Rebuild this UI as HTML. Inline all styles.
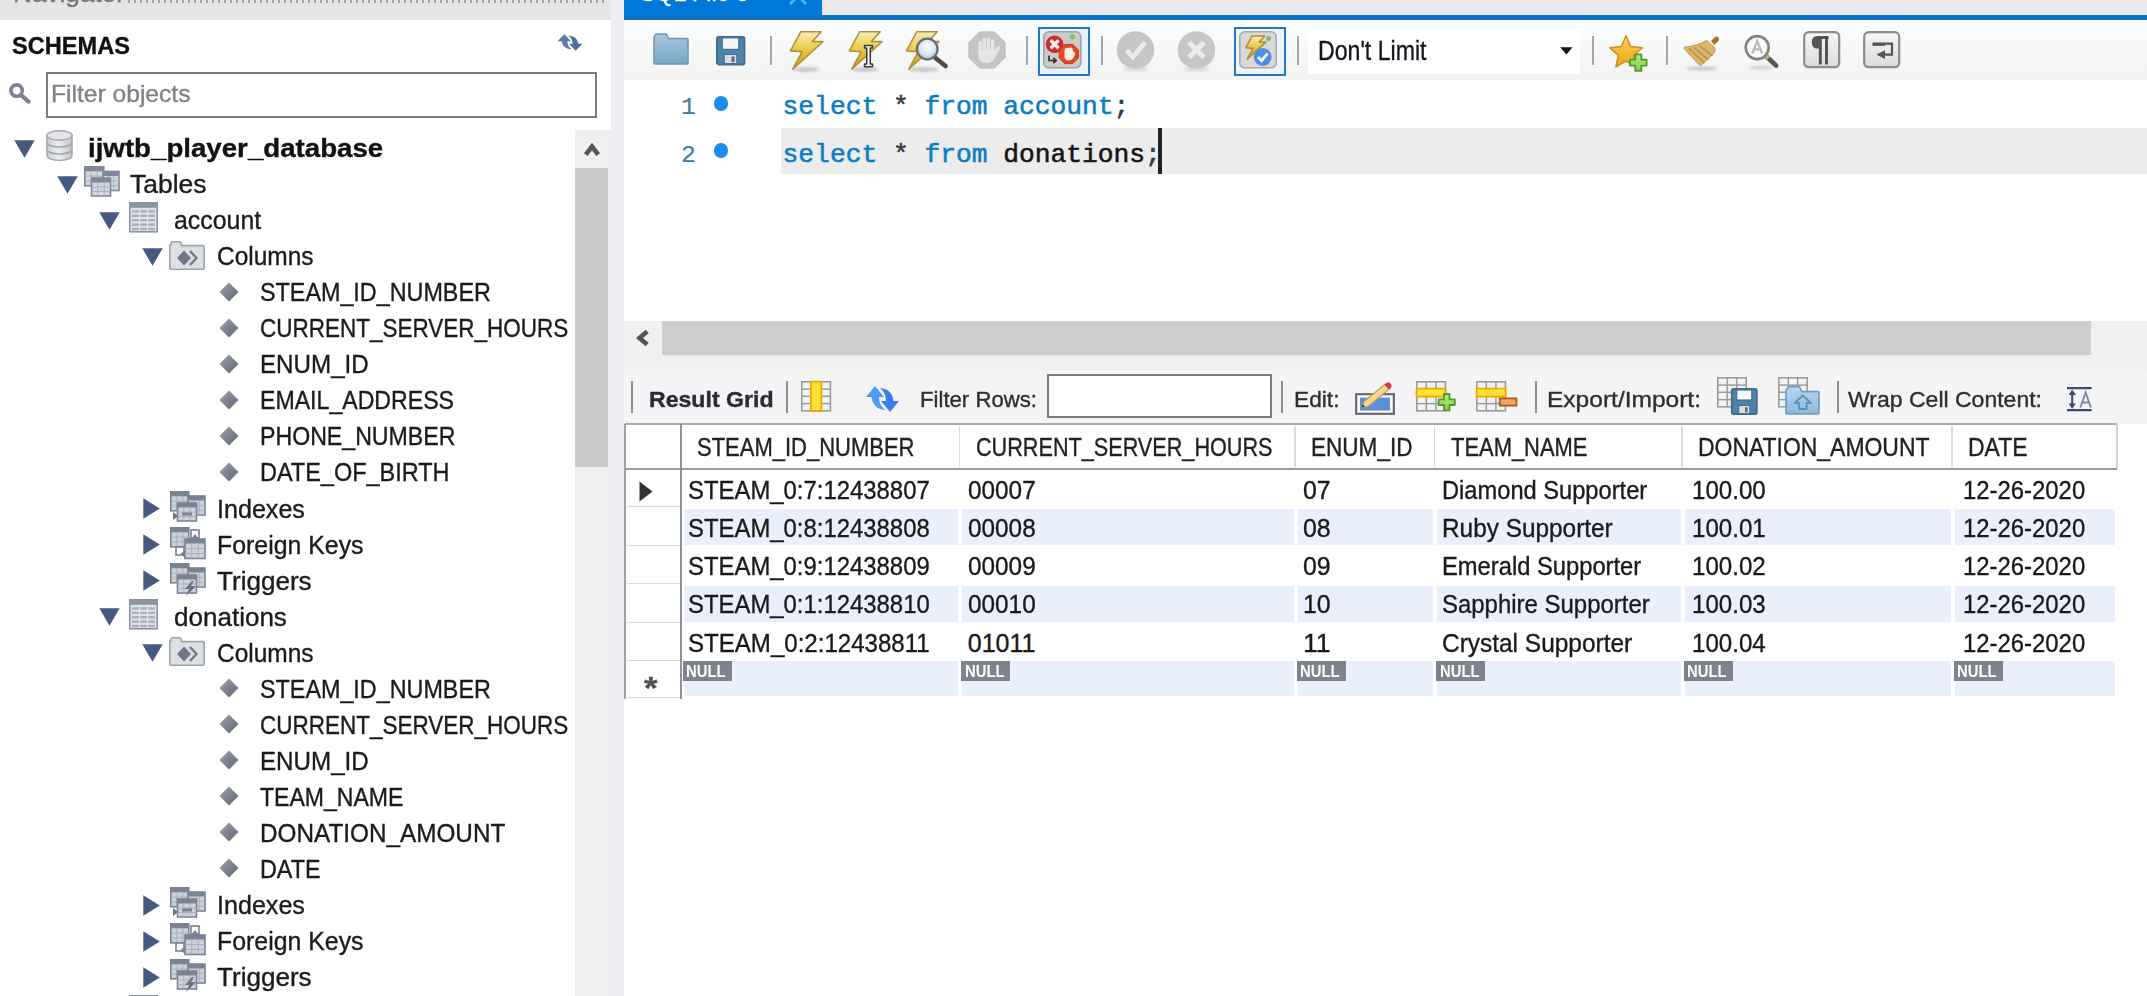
<!DOCTYPE html>
<html><head><meta charset="utf-8"><title>MySQL Workbench</title>
<style>
html,body{margin:0;padding:0;background:#fff;}
body{width:2147px;height:996px;overflow:hidden;font-family:"Liberation Sans",sans-serif;}
#root{position:relative;width:2147px;height:996px;overflow:hidden;background:#fff;}
.b{position:absolute;}
.t{position:absolute;white-space:pre;display:inline-block;transform-origin:0 50%;-webkit-text-stroke:0.35px currentColor;}
svg{position:absolute;overflow:visible;}
</style></head><body><div id="root">
<div class="b" style="left:0px;top:0px;width:611px;height:20px;background:#e5e5e5;"></div>
<div class="b" style="left:611px;top:0px;width:13px;height:996px;background:#eeeef2;"></div>
<div class="b" style="left:128px;top:0;width:478px;height:3px;background:repeating-linear-gradient(90deg,#8a8a8a 0 2px,transparent 2px 6px);opacity:.7"></div>
<div class="b" style="left:46px;top:72px;width:551px;height:46px;background:#fff;box-sizing:border-box;border:2px solid #7a7a7a;"></div>
<div class="b" style="left:574.5px;top:130px;width:34px;height:866px;background:#f0f0f0;"></div>
<div class="b" style="left:608px;top:130px;width:16px;height:866px;background:#eeeef2;"></div>
<div class="b" style="left:574.5px;top:168px;width:33.7px;height:299px;background:#cbcbcb;"></div>
<svg style="left:583.5px;top:142.4px" width="16" height="15" viewBox="0 0 16 15"><path d="M1.8 12.6 L8 4.6 L14.2 12.6" fill="none" stroke="#555" stroke-width="4.6"/></svg>
<div class="b" style="left:624px;top:0px;width:1523px;height:15.5px;background:#e8e8ec;"></div>
<div class="b" style="left:624px;top:0px;width:197.5px;height:16px;background:#0078d7;"></div>
<div class="b" style="left:624px;top:15.4px;width:1523px;height:4.3px;background:#0b72c6;"></div>
<div class="b" style="left:624px;top:19.7px;width:1523px;height:60.3px;background:linear-gradient(#fcfdfe,#f2f2f2);"></div>
<svg style="left:789px;top:-12px" width="18" height="17" viewBox="0 0 18 17"><path d="M1 0 L17 16 M17 0 L1 16" stroke="#58b6ff" stroke-width="2.6" fill="none"/></svg>
<div class="b" style="left:624px;top:80px;width:1523px;height:241px;background:#fff;"></div>
<div class="b" style="left:781.3px;top:128px;width:1366px;height:46.4px;background:#ececec;"></div>
<div class="b" style="left:1158px;top:128px;width:3.8px;height:46.4px;background:#222;"></div>
<div class="b" style="left:624px;top:321px;width:1523px;height:34px;background:#f0f0f0;"></div>
<div class="b" style="left:662px;top:321px;width:1429px;height:34px;background:#cdcdcd;"></div>
<svg style="left:634.6px;top:328.3px" width="16" height="20" viewBox="0 0 16 20"><path d="M12.2 3.4 L4.4 10 L12.2 16.6" fill="none" stroke="#555" stroke-width="4.6"/></svg>
<div class="b" style="left:624px;top:355px;width:1523px;height:69px;background:linear-gradient(#efefef 0,#f0f0f0 12px,#f4f4f6 22px,#f4f4f6 100%);"></div>
<svg style="left:14.3px;top:139.79999999999998px" width="21" height="18" viewBox="0 0 21 18"><path d="M0.3 0.3 H20.7 L10.5 17.8 Z" fill="#465a7f"/></svg>
<svg style="left:45.5px;top:130.29999999999998px" width="27" height="31" viewBox="0 0 27 31"><defs><linearGradient id="dbg" x1="0" y1="0" x2="1" y2="0"><stop offset="0" stop-color="#c9ccd1"/><stop offset=".45" stop-color="#eceef0"/><stop offset="1" stop-color="#c3c6cc"/></linearGradient></defs><path d="M1 5.5 V25.5 C1 32 26 32 26 25.5 V5.5 Z" fill="url(#dbg)" stroke="#a3a7ae" stroke-width="1.5"/><ellipse cx="13.5" cy="5.5" rx="12.5" ry="4.8" fill="#e3e5e8" stroke="#a3a7ae" stroke-width="1.5"/><path d="M1 12.5 C1 18.5 26 18.5 26 12.5" fill="none" stroke="#a3a7ae" stroke-width="1.6"/><path d="M1 19.5 C1 25.5 26 25.5 26 19.5" fill="none" stroke="#a3a7ae" stroke-width="1.6"/></svg>
<svg style="left:57.3px;top:175.83999999999997px" width="21" height="18" viewBox="0 0 21 18"><path d="M0.3 0.3 H20.7 L10.5 17.8 Z" fill="#465a7f"/></svg>
<svg style="left:84px;top:166.14px" width="36" height="31" viewBox="0 0 36 31"><rect x="0.8" y="0.8" width="19" height="19" fill="#d3d7de" stroke="#7f8898" stroke-width="1.6"/><rect x="0.8" y="0.8" width="19" height="4.5" fill="#7f8898"/><path d="M0.8 10.1 H19.8" stroke="#aab0bb" stroke-width="1"/><path d="M0.8 15.0 H19.8" stroke="#aab0bb" stroke-width="1"/><path d="M7.1 5.3 V19.8" stroke="#aab0bb" stroke-width="1"/><path d="M13.5 5.3 V19.8" stroke="#aab0bb" stroke-width="1"/><rect x="19" y="5.5" width="16" height="19" fill="#d3d7de" stroke="#7f8898" stroke-width="1.6"/><rect x="19" y="5.5" width="16" height="4.5" fill="#7f8898"/><path d="M19 14.8 H35" stroke="#aab0bb" stroke-width="1"/><path d="M19 19.7 H35" stroke="#aab0bb" stroke-width="1"/><path d="M24.3 10.0 V24.5" stroke="#aab0bb" stroke-width="1"/><path d="M29.7 10.0 V24.5" stroke="#aab0bb" stroke-width="1"/><rect x="7.5" y="12" width="19" height="18" fill="#d3d7de" stroke="#7f8898" stroke-width="1.6"/><rect x="7.5" y="12" width="19" height="4.5" fill="#7f8898"/><path d="M7.5 21.0 H26.5" stroke="#aab0bb" stroke-width="1"/><path d="M7.5 25.5 H26.5" stroke="#aab0bb" stroke-width="1"/><path d="M13.8 16.5 V30" stroke="#aab0bb" stroke-width="1"/><path d="M20.2 16.5 V30" stroke="#aab0bb" stroke-width="1"/></svg>
<svg style="left:99.3px;top:211.88px" width="21" height="18" viewBox="0 0 21 18"><path d="M0.3 0.3 H20.7 L10.5 17.8 Z" fill="#465a7f"/></svg>
<svg style="left:129px;top:202.18px" width="29" height="31" viewBox="0 0 29 31"><rect x="0.8" y="0.8" width="27.4" height="29" fill="#dfe2e7" stroke="#8d94a1" stroke-width="1.6"/><rect x="0.8" y="0.8" width="27.4" height="5" fill="#8d94a1"/><rect x="3" y="8.3" width="23" height="2.3" fill="#a9afba"/><rect x="3" y="12.7" width="23" height="2.3" fill="#a9afba"/><rect x="3" y="17.1" width="23" height="2.3" fill="#a9afba"/><rect x="3" y="21.5" width="23" height="2.3" fill="#a9afba"/><rect x="3" y="25.9" width="23" height="2.3" fill="#a9afba"/><path d="M10.5 7 V29 M18.5 7 V29" stroke="#dfe2e7" stroke-width="1.3"/></svg>
<svg style="left:142.3px;top:247.92000000000002px" width="21" height="18" viewBox="0 0 21 18"><path d="M0.3 0.3 H20.7 L10.5 17.8 Z" fill="#465a7f"/></svg>
<svg style="left:169px;top:240.62000000000003px" width="36" height="29" viewBox="0 0 36 29"><path d="M2 4 V2 Q2 0.8 3.2 0.8 H10.5 Q11.7 0.8 12 2 L12.6 4.6 H34 Q35.2 4.6 35.2 5.8 V27 Q35.2 28.2 34 28.2 H2 Q0.8 28.2 0.8 27 V4 Z" fill="#dcdfe4" stroke="#9ca2ad" stroke-width="1.6"/><path d="M15 9.5 L22 17 L15 24.5 L8 17 Z" fill="#6f7787"/><path d="M21 10 L27.5 17 L21 24" fill="none" stroke="#6f7787" stroke-width="2.4"/></svg>
<svg style="left:219.3px;top:281.76px" width="20" height="20" viewBox="0 0 20 20"><defs><linearGradient id="dg" x1="0" y1="0" x2="1" y2="1"><stop offset="0" stop-color="#9aa0ab"/><stop offset="1" stop-color="#5f6673"/></linearGradient></defs><path d="M10 0.5 L19.5 10 L10 19.5 L0.5 10 Z" fill="url(#dg)"/></svg>
<svg style="left:219.3px;top:317.79999999999995px" width="20" height="20" viewBox="0 0 20 20"><defs><linearGradient id="dg" x1="0" y1="0" x2="1" y2="1"><stop offset="0" stop-color="#9aa0ab"/><stop offset="1" stop-color="#5f6673"/></linearGradient></defs><path d="M10 0.5 L19.5 10 L10 19.5 L0.5 10 Z" fill="url(#dg)"/></svg>
<svg style="left:219.3px;top:353.84000000000003px" width="20" height="20" viewBox="0 0 20 20"><defs><linearGradient id="dg" x1="0" y1="0" x2="1" y2="1"><stop offset="0" stop-color="#9aa0ab"/><stop offset="1" stop-color="#5f6673"/></linearGradient></defs><path d="M10 0.5 L19.5 10 L10 19.5 L0.5 10 Z" fill="url(#dg)"/></svg>
<svg style="left:219.3px;top:389.88px" width="20" height="20" viewBox="0 0 20 20"><defs><linearGradient id="dg" x1="0" y1="0" x2="1" y2="1"><stop offset="0" stop-color="#9aa0ab"/><stop offset="1" stop-color="#5f6673"/></linearGradient></defs><path d="M10 0.5 L19.5 10 L10 19.5 L0.5 10 Z" fill="url(#dg)"/></svg>
<svg style="left:219.3px;top:425.91999999999996px" width="20" height="20" viewBox="0 0 20 20"><defs><linearGradient id="dg" x1="0" y1="0" x2="1" y2="1"><stop offset="0" stop-color="#9aa0ab"/><stop offset="1" stop-color="#5f6673"/></linearGradient></defs><path d="M10 0.5 L19.5 10 L10 19.5 L0.5 10 Z" fill="url(#dg)"/></svg>
<svg style="left:219.3px;top:461.96000000000004px" width="20" height="20" viewBox="0 0 20 20"><defs><linearGradient id="dg" x1="0" y1="0" x2="1" y2="1"><stop offset="0" stop-color="#9aa0ab"/><stop offset="1" stop-color="#5f6673"/></linearGradient></defs><path d="M10 0.5 L19.5 10 L10 19.5 L0.5 10 Z" fill="url(#dg)"/></svg>
<svg style="left:142.7px;top:498.4px" width="17" height="21" viewBox="0 0 17 21"><path d="M0.3 0.3 V20.7 L16.8 10.5 Z" fill="#465a7f"/></svg>
<svg style="left:169.5px;top:490.7px" width="36" height="31" viewBox="0 0 36 31"><rect x="0.8" y="0.8" width="18" height="19" fill="#ccd1d9" stroke="#7a8393" stroke-width="1.6"/><rect x="0.8" y="0.8" width="18" height="4.5" fill="#7a8393"/><path d="M0.8 10.1 H18.8" stroke="#aab0bb" stroke-width="1"/><path d="M0.8 15.0 H18.8" stroke="#aab0bb" stroke-width="1"/><path d="M6.8 5.3 V19.8" stroke="#aab0bb" stroke-width="1"/><path d="M12.8 5.3 V19.8" stroke="#aab0bb" stroke-width="1"/><rect x="18" y="5" width="17" height="19" fill="#ccd1d9" stroke="#7a8393" stroke-width="1.6"/><rect x="18" y="5" width="17" height="4.5" fill="#7a8393"/><path d="M18 14.3 H35" stroke="#aab0bb" stroke-width="1"/><path d="M18 19.2 H35" stroke="#aab0bb" stroke-width="1"/><path d="M23.7 9.5 V24" stroke="#aab0bb" stroke-width="1"/><path d="M29.3 9.5 V24" stroke="#aab0bb" stroke-width="1"/><rect x="7.5" y="12" width="19" height="18" fill="#cfd3db" stroke="#7a8393" stroke-width="1.6"/><rect x="7.5" y="12" width="19" height="4.5" fill="#7a8393"/><path d="M7.5 21.0 H26.5" stroke="#aab0bb" stroke-width="1"/><path d="M7.5 25.5 H26.5" stroke="#aab0bb" stroke-width="1"/><path d="M13.8 16.5 V30" stroke="#aab0bb" stroke-width="1"/><path d="M20.2 16.5 V30" stroke="#aab0bb" stroke-width="1"/><path d="M3 21 V29 L8 25 Z" fill="#6a7385"/><rect x="12" y="21.5" width="10" height="3" fill="#7a8393"/></svg>
<svg style="left:142.7px;top:534.44px" width="17" height="21" viewBox="0 0 17 21"><path d="M0.3 0.3 V20.7 L16.8 10.5 Z" fill="#465a7f"/></svg>
<svg style="left:169.5px;top:526.74px" width="36" height="33" viewBox="0 0 36 33"><rect x="0.8" y="0.8" width="18" height="19" fill="#ccd1d9" stroke="#7a8393" stroke-width="1.6"/><rect x="0.8" y="0.8" width="18" height="4.5" fill="#7a8393"/><path d="M0.8 10.1 H18.8" stroke="#aab0bb" stroke-width="1"/><path d="M0.8 15.0 H18.8" stroke="#aab0bb" stroke-width="1"/><path d="M6.8 5.3 V19.8" stroke="#aab0bb" stroke-width="1"/><path d="M12.8 5.3 V19.8" stroke="#aab0bb" stroke-width="1"/><rect x="21" y="3" width="8" height="8" fill="#fff" stroke="#7a8393" stroke-width="1.6"/><rect x="6" y="20" width="8" height="8" fill="#fff" stroke="#7a8393" stroke-width="1.6"/><rect x="15" y="12" width="20" height="19.5" fill="#ccd1d9" stroke="#7a8393" stroke-width="1.6"/><rect x="15" y="12" width="20" height="4.5" fill="#7a8393"/><path d="M15 21.5 H35" stroke="#aab0bb" stroke-width="1"/><path d="M15 26.5 H35" stroke="#aab0bb" stroke-width="1"/><path d="M21.7 16.5 V31.5" stroke="#aab0bb" stroke-width="1"/><path d="M28.3 16.5 V31.5" stroke="#aab0bb" stroke-width="1"/><path d="M21 12 L25 7 L29 12 Z" fill="#7a8393"/><path d="M15 23 L10.5 27 L15 31 Z" fill="#7a8393"/></svg>
<svg style="left:142.7px;top:570.4800000000001px" width="17" height="21" viewBox="0 0 17 21"><path d="M0.3 0.3 V20.7 L16.8 10.5 Z" fill="#465a7f"/></svg>
<svg style="left:169.5px;top:562.7800000000001px" width="36" height="33" viewBox="0 0 36 33"><rect x="0.8" y="0.8" width="18" height="19" fill="#ccd1d9" stroke="#7a8393" stroke-width="1.6"/><rect x="0.8" y="0.8" width="18" height="4.5" fill="#7a8393"/><path d="M0.8 10.1 H18.8" stroke="#aab0bb" stroke-width="1"/><path d="M0.8 15.0 H18.8" stroke="#aab0bb" stroke-width="1"/><path d="M6.8 5.3 V19.8" stroke="#aab0bb" stroke-width="1"/><path d="M12.8 5.3 V19.8" stroke="#aab0bb" stroke-width="1"/><rect x="18" y="5" width="17" height="19" fill="#ccd1d9" stroke="#7a8393" stroke-width="1.6"/><rect x="18" y="5" width="17" height="4.5" fill="#7a8393"/><path d="M18 14.3 H35" stroke="#aab0bb" stroke-width="1"/><path d="M18 19.2 H35" stroke="#aab0bb" stroke-width="1"/><path d="M23.7 9.5 V24" stroke="#aab0bb" stroke-width="1"/><path d="M29.3 9.5 V24" stroke="#aab0bb" stroke-width="1"/><rect x="7.5" y="12" width="19" height="18" fill="#cfd3db" stroke="#7a8393" stroke-width="1.6"/><rect x="7.5" y="12" width="19" height="4.5" fill="#7a8393"/><path d="M7.5 21.0 H26.5" stroke="#aab0bb" stroke-width="1"/><path d="M7.5 25.5 H26.5" stroke="#aab0bb" stroke-width="1"/><path d="M13.8 16.5 V30" stroke="#aab0bb" stroke-width="1"/><path d="M20.2 16.5 V30" stroke="#aab0bb" stroke-width="1"/><path d="M22 18 L15 26 H19 L16 33 L26 23 H21 L24 18 Z" fill="#6a7385"/></svg>
<svg style="left:99.3px;top:608.32px" width="21" height="18" viewBox="0 0 21 18"><path d="M0.3 0.3 H20.7 L10.5 17.8 Z" fill="#465a7f"/></svg>
<svg style="left:129px;top:598.62px" width="29" height="31" viewBox="0 0 29 31"><rect x="0.8" y="0.8" width="27.4" height="29" fill="#dfe2e7" stroke="#8d94a1" stroke-width="1.6"/><rect x="0.8" y="0.8" width="27.4" height="5" fill="#8d94a1"/><rect x="3" y="8.3" width="23" height="2.3" fill="#a9afba"/><rect x="3" y="12.7" width="23" height="2.3" fill="#a9afba"/><rect x="3" y="17.1" width="23" height="2.3" fill="#a9afba"/><rect x="3" y="21.5" width="23" height="2.3" fill="#a9afba"/><rect x="3" y="25.9" width="23" height="2.3" fill="#a9afba"/><path d="M10.5 7 V29 M18.5 7 V29" stroke="#dfe2e7" stroke-width="1.3"/></svg>
<svg style="left:142.3px;top:644.36px" width="21" height="18" viewBox="0 0 21 18"><path d="M0.3 0.3 H20.7 L10.5 17.8 Z" fill="#465a7f"/></svg>
<svg style="left:169px;top:637.06px" width="36" height="29" viewBox="0 0 36 29"><path d="M2 4 V2 Q2 0.8 3.2 0.8 H10.5 Q11.7 0.8 12 2 L12.6 4.6 H34 Q35.2 4.6 35.2 5.8 V27 Q35.2 28.2 34 28.2 H2 Q0.8 28.2 0.8 27 V4 Z" fill="#dcdfe4" stroke="#9ca2ad" stroke-width="1.6"/><path d="M15 9.5 L22 17 L15 24.5 L8 17 Z" fill="#6f7787"/><path d="M21 10 L27.5 17 L21 24" fill="none" stroke="#6f7787" stroke-width="2.4"/></svg>
<svg style="left:219.3px;top:678.2px" width="20" height="20" viewBox="0 0 20 20"><defs><linearGradient id="dg" x1="0" y1="0" x2="1" y2="1"><stop offset="0" stop-color="#9aa0ab"/><stop offset="1" stop-color="#5f6673"/></linearGradient></defs><path d="M10 0.5 L19.5 10 L10 19.5 L0.5 10 Z" fill="url(#dg)"/></svg>
<svg style="left:219.3px;top:714.24px" width="20" height="20" viewBox="0 0 20 20"><defs><linearGradient id="dg" x1="0" y1="0" x2="1" y2="1"><stop offset="0" stop-color="#9aa0ab"/><stop offset="1" stop-color="#5f6673"/></linearGradient></defs><path d="M10 0.5 L19.5 10 L10 19.5 L0.5 10 Z" fill="url(#dg)"/></svg>
<svg style="left:219.3px;top:750.28px" width="20" height="20" viewBox="0 0 20 20"><defs><linearGradient id="dg" x1="0" y1="0" x2="1" y2="1"><stop offset="0" stop-color="#9aa0ab"/><stop offset="1" stop-color="#5f6673"/></linearGradient></defs><path d="M10 0.5 L19.5 10 L10 19.5 L0.5 10 Z" fill="url(#dg)"/></svg>
<svg style="left:219.3px;top:786.32px" width="20" height="20" viewBox="0 0 20 20"><defs><linearGradient id="dg" x1="0" y1="0" x2="1" y2="1"><stop offset="0" stop-color="#9aa0ab"/><stop offset="1" stop-color="#5f6673"/></linearGradient></defs><path d="M10 0.5 L19.5 10 L10 19.5 L0.5 10 Z" fill="url(#dg)"/></svg>
<svg style="left:219.3px;top:822.36px" width="20" height="20" viewBox="0 0 20 20"><defs><linearGradient id="dg" x1="0" y1="0" x2="1" y2="1"><stop offset="0" stop-color="#9aa0ab"/><stop offset="1" stop-color="#5f6673"/></linearGradient></defs><path d="M10 0.5 L19.5 10 L10 19.5 L0.5 10 Z" fill="url(#dg)"/></svg>
<svg style="left:219.3px;top:858.4px" width="20" height="20" viewBox="0 0 20 20"><defs><linearGradient id="dg" x1="0" y1="0" x2="1" y2="1"><stop offset="0" stop-color="#9aa0ab"/><stop offset="1" stop-color="#5f6673"/></linearGradient></defs><path d="M10 0.5 L19.5 10 L10 19.5 L0.5 10 Z" fill="url(#dg)"/></svg>
<svg style="left:142.7px;top:894.8400000000001px" width="17" height="21" viewBox="0 0 17 21"><path d="M0.3 0.3 V20.7 L16.8 10.5 Z" fill="#465a7f"/></svg>
<svg style="left:169.5px;top:887.1400000000001px" width="36" height="31" viewBox="0 0 36 31"><rect x="0.8" y="0.8" width="18" height="19" fill="#ccd1d9" stroke="#7a8393" stroke-width="1.6"/><rect x="0.8" y="0.8" width="18" height="4.5" fill="#7a8393"/><path d="M0.8 10.1 H18.8" stroke="#aab0bb" stroke-width="1"/><path d="M0.8 15.0 H18.8" stroke="#aab0bb" stroke-width="1"/><path d="M6.8 5.3 V19.8" stroke="#aab0bb" stroke-width="1"/><path d="M12.8 5.3 V19.8" stroke="#aab0bb" stroke-width="1"/><rect x="18" y="5" width="17" height="19" fill="#ccd1d9" stroke="#7a8393" stroke-width="1.6"/><rect x="18" y="5" width="17" height="4.5" fill="#7a8393"/><path d="M18 14.3 H35" stroke="#aab0bb" stroke-width="1"/><path d="M18 19.2 H35" stroke="#aab0bb" stroke-width="1"/><path d="M23.7 9.5 V24" stroke="#aab0bb" stroke-width="1"/><path d="M29.3 9.5 V24" stroke="#aab0bb" stroke-width="1"/><rect x="7.5" y="12" width="19" height="18" fill="#cfd3db" stroke="#7a8393" stroke-width="1.6"/><rect x="7.5" y="12" width="19" height="4.5" fill="#7a8393"/><path d="M7.5 21.0 H26.5" stroke="#aab0bb" stroke-width="1"/><path d="M7.5 25.5 H26.5" stroke="#aab0bb" stroke-width="1"/><path d="M13.8 16.5 V30" stroke="#aab0bb" stroke-width="1"/><path d="M20.2 16.5 V30" stroke="#aab0bb" stroke-width="1"/><path d="M3 21 V29 L8 25 Z" fill="#6a7385"/><rect x="12" y="21.5" width="10" height="3" fill="#7a8393"/></svg>
<svg style="left:142.7px;top:930.8800000000001px" width="17" height="21" viewBox="0 0 17 21"><path d="M0.3 0.3 V20.7 L16.8 10.5 Z" fill="#465a7f"/></svg>
<svg style="left:169.5px;top:923.1800000000001px" width="36" height="33" viewBox="0 0 36 33"><rect x="0.8" y="0.8" width="18" height="19" fill="#ccd1d9" stroke="#7a8393" stroke-width="1.6"/><rect x="0.8" y="0.8" width="18" height="4.5" fill="#7a8393"/><path d="M0.8 10.1 H18.8" stroke="#aab0bb" stroke-width="1"/><path d="M0.8 15.0 H18.8" stroke="#aab0bb" stroke-width="1"/><path d="M6.8 5.3 V19.8" stroke="#aab0bb" stroke-width="1"/><path d="M12.8 5.3 V19.8" stroke="#aab0bb" stroke-width="1"/><rect x="21" y="3" width="8" height="8" fill="#fff" stroke="#7a8393" stroke-width="1.6"/><rect x="6" y="20" width="8" height="8" fill="#fff" stroke="#7a8393" stroke-width="1.6"/><rect x="15" y="12" width="20" height="19.5" fill="#ccd1d9" stroke="#7a8393" stroke-width="1.6"/><rect x="15" y="12" width="20" height="4.5" fill="#7a8393"/><path d="M15 21.5 H35" stroke="#aab0bb" stroke-width="1"/><path d="M15 26.5 H35" stroke="#aab0bb" stroke-width="1"/><path d="M21.7 16.5 V31.5" stroke="#aab0bb" stroke-width="1"/><path d="M28.3 16.5 V31.5" stroke="#aab0bb" stroke-width="1"/><path d="M21 12 L25 7 L29 12 Z" fill="#7a8393"/><path d="M15 23 L10.5 27 L15 31 Z" fill="#7a8393"/></svg>
<svg style="left:142.7px;top:966.9200000000001px" width="17" height="21" viewBox="0 0 17 21"><path d="M0.3 0.3 V20.7 L16.8 10.5 Z" fill="#465a7f"/></svg>
<svg style="left:169.5px;top:959.22px" width="36" height="33" viewBox="0 0 36 33"><rect x="0.8" y="0.8" width="18" height="19" fill="#ccd1d9" stroke="#7a8393" stroke-width="1.6"/><rect x="0.8" y="0.8" width="18" height="4.5" fill="#7a8393"/><path d="M0.8 10.1 H18.8" stroke="#aab0bb" stroke-width="1"/><path d="M0.8 15.0 H18.8" stroke="#aab0bb" stroke-width="1"/><path d="M6.8 5.3 V19.8" stroke="#aab0bb" stroke-width="1"/><path d="M12.8 5.3 V19.8" stroke="#aab0bb" stroke-width="1"/><rect x="18" y="5" width="17" height="19" fill="#ccd1d9" stroke="#7a8393" stroke-width="1.6"/><rect x="18" y="5" width="17" height="4.5" fill="#7a8393"/><path d="M18 14.3 H35" stroke="#aab0bb" stroke-width="1"/><path d="M18 19.2 H35" stroke="#aab0bb" stroke-width="1"/><path d="M23.7 9.5 V24" stroke="#aab0bb" stroke-width="1"/><path d="M29.3 9.5 V24" stroke="#aab0bb" stroke-width="1"/><rect x="7.5" y="12" width="19" height="18" fill="#cfd3db" stroke="#7a8393" stroke-width="1.6"/><rect x="7.5" y="12" width="19" height="4.5" fill="#7a8393"/><path d="M7.5 21.0 H26.5" stroke="#aab0bb" stroke-width="1"/><path d="M7.5 25.5 H26.5" stroke="#aab0bb" stroke-width="1"/><path d="M13.8 16.5 V30" stroke="#aab0bb" stroke-width="1"/><path d="M20.2 16.5 V30" stroke="#aab0bb" stroke-width="1"/><path d="M22 18 L15 26 H19 L16 33 L26 23 H21 L24 18 Z" fill="#6a7385"/></svg>
<svg style="left:129px;top:995.0600000000001px" width="29" height="31" viewBox="0 0 29 31"><rect x="0.8" y="0.8" width="27.4" height="29" fill="#dfe2e7" stroke="#8d94a1" stroke-width="1.6"/><rect x="0.8" y="0.8" width="27.4" height="5" fill="#8d94a1"/><rect x="3" y="8.3" width="23" height="2.3" fill="#a9afba"/><rect x="3" y="12.7" width="23" height="2.3" fill="#a9afba"/><rect x="3" y="17.1" width="23" height="2.3" fill="#a9afba"/><rect x="3" y="21.5" width="23" height="2.3" fill="#a9afba"/><rect x="3" y="25.9" width="23" height="2.3" fill="#a9afba"/><path d="M10.5 7 V29 M18.5 7 V29" stroke="#dfe2e7" stroke-width="1.3"/></svg>
<svg style="left:556px;top:32.5px" width="28" height="19" viewBox="0 0 28 19"><g transform="scale(0.757,0.633)"><path d="M2 13 L11 2 L20 13 H15 Q15 21 21 26 Q9 25 7.5 13 Z" fill="#5c7ca6"/><path d="M35 17 L26 28 L17 17 H22 Q22 9 16 4 Q28 5 29.5 17 Z" fill="#4f6f99"/></g></svg>
<svg style="left:9.4px;top:82.7px" width="22" height="22" viewBox="0 0 22 22"><circle cx="7.6" cy="7.6" r="5.7" fill="none" stroke="#7a828f" stroke-width="3.6"/><path d="M12 12 L19.6 18.6" stroke="#7a828f" stroke-width="4.2" stroke-linecap="round"/></svg>
<svg style="left:653px;top:33.2px" width="36" height="32" viewBox="0 0 36 32"><defs><linearGradient id="fg" x1="0" y1="0" x2="0" y2="1"><stop offset="0" stop-color="#a9c7dd"/><stop offset="1" stop-color="#7aa6c6"/></linearGradient></defs><path d="M1 30 V4.5 L3 1 H13.5 L15.5 5.5 H34 Q35 5.5 35 6.5 V30 Q35 31 34 31 H2 Q1 31 1 30 Z" fill="url(#fg)" stroke="#6d97b7" stroke-width="1.6" stroke-linejoin="round"/></svg>
<svg style="left:716.2px;top:35.8px" width="30" height="30" viewBox="0 0 30 30"><rect x="0.9" y="0.9" width="27.6" height="27.6" rx="1.8" fill="#5183a6" stroke="#3d6d8f" stroke-width="1.8"/><rect x="6.2" y="1.8" width="16.6" height="11.6" fill="#f4f7fa" stroke="#3d6d8f" stroke-width="1.2"/><rect x="8.2" y="18.5" width="12.6" height="9" fill="#d9dde1" stroke="#3d6d8f" stroke-width="1"/><rect x="15.5" y="20.5" width="3" height="5.5" fill="#5b6c7a"/></svg>
<div class="b" style="left:770px;top:36px;width:2px;height:29px;background:#a6a6a6"></div>
<svg style="left:790px;top:30.5px" width="36" height="42" viewBox="0 0 36 42"><defs><filter id="blur" x="-50%" y="-200%" width="200%" height="500%"><feGaussianBlur stdDeviation="1.5"/></filter></defs><defs><linearGradient id="bg1" x1="0" y1="0" x2="0" y2="1"><stop offset="0" stop-color="#f7ecc0"/><stop offset=".3" stop-color="#efd768"/><stop offset=".6" stop-color="#e2bf35"/><stop offset="1" stop-color="#c79f28"/></linearGradient></defs><ellipse cx="16" cy="38.5" rx="13" ry="2.2" fill="#000" opacity="0.2" filter="url(#blur)"/><path d="M10.7 0.8 L31.2 0.8 L22.3 10.6 L33.0 10.6 L2.8 38.1 L12.1 20.8 L0.4 19.9 Z" fill="url(#bg1)" stroke="#b4903a" stroke-width="1.6" stroke-linejoin="round"/></svg>
<svg style="left:849.3px;top:30.5px" width="36" height="42" viewBox="0 0 36 42"><defs><filter id="blur" x="-50%" y="-200%" width="200%" height="500%"><feGaussianBlur stdDeviation="1.5"/></filter></defs><ellipse cx="16" cy="38.5" rx="13" ry="2.2" fill="#000" opacity="0.2" filter="url(#blur)"/><path d="M10.7 0.8 L31.2 0.8 L22.3 10.6 L33.0 10.6 L2.8 38.1 L12.1 20.8 L0.4 19.9 Z" fill="url(#bg1)" stroke="#b4903a" stroke-width="1.6" stroke-linejoin="round"/><path d="M15.5 14.5 H23.5 V17 H21.3 V33 H23.5 V35.8 H15.5 V33 H17.7 V17 H15.5 Z" fill="#f4f4f4" stroke="#3b3b3b" stroke-width="1.5" stroke-linejoin="round"/></svg>
<svg style="left:905.8px;top:30.5px" width="42" height="42" viewBox="0 0 42 42"><defs><filter id="blur" x="-50%" y="-200%" width="200%" height="500%"><feGaussianBlur stdDeviation="1.5"/></filter></defs><ellipse cx="18" cy="38.5" rx="15" ry="2.2" fill="#000" opacity="0.2" filter="url(#blur)"/><path d="M10.7 0.8 L31.2 0.8 L22.3 10.6 L33.0 10.6 L2.8 38.1 L12.1 20.8 L0.4 19.9 Z" fill="url(#bg1)" stroke="#b4903a" stroke-width="1.6" stroke-linejoin="round"/><defs><radialGradient id="lens" cx=".5" cy=".4" r=".6"><stop offset="0" stop-color="#fdfdf4"/><stop offset=".6" stop-color="#d9e8f5"/><stop offset="1" stop-color="#a9c4e6"/></radialGradient></defs><path d="M29.5 27 L39.5 35" stroke="#4b4b4b" stroke-width="4.6" stroke-linecap="round"/><circle cx="21.3" cy="18" r="10.3" fill="url(#lens)" stroke="#6b6b72" stroke-width="2.3"/></svg>
<svg style="left:968.3px;top:30.7px" width="38" height="38" viewBox="0 0 38 38"><polygon points="37.1,26.5 26.5,37.1 11.5,37.1 0.9,26.5 0.9,11.5 11.5,0.9 26.5,0.9 37.1,11.5" fill="#c5c5c5" stroke="#bcbcbc" stroke-width="1"/><g fill="#e6e6e6"><rect x="10.5" y="10" width="3.4" height="14" rx="1.7"/><rect x="14.6" y="7" width="3.4" height="16" rx="1.7"/><rect x="18.7" y="6.5" width="3.4" height="16" rx="1.7"/><rect x="22.8" y="8.5" width="3.4" height="15" rx="1.7"/><path d="M10.5 19 H26.2 L29.5 15.5 Q32 14.5 31.8 17.5 L27 27 Q24 32 18.5 32 Q10.5 32 10.5 25 Z"/></g></svg>
<div class="b" style="left:1026.2px;top:36px;width:2px;height:29px;background:#a6a6a6"></div>
<div class="b" style="left:1038px;top:26.5px;width:52px;height:49.5px;box-sizing:border-box;border:2.5px solid #1f78cb;background:#e9f1fa"></div>
<svg style="left:1042.6px;top:31.4px" width="39" height="38" viewBox="0 0 39 38"><rect x="0.8" y="0.8" width="37" height="36" rx="5" fill="#cbcbcb" stroke="#a2a2a2" stroke-width="1.6"/><circle cx="11.6" cy="13.2" r="8.8" fill="#c62d2d"/><path d="M7.6 9.2 L15.6 17.2 M15.6 9.2 L7.6 17.2" stroke="#fbe9e9" stroke-width="3.4"/><circle cx="29.6" cy="5.8" r="2.6" fill="#7fc06a"/><polygon points="35.4,27.0 29.8,32.6 21.8,32.6 16.2,27.0 16.2,19.0 21.8,13.4 29.8,13.4 35.4,19.0" fill="#e2491d" stroke="#c9361a" stroke-width="1"/><path d="M21.5 19.5 Q21.5 17 23 17 L28.5 16.5 Q30 17 30 20 L32 21.5 Q32.5 24 30.5 27 Q28 30 24.5 29.5 Q21 28.5 21.5 24 Z" fill="#fdeee6"/><path d="M6 24.5 V29.5 H12.5 M10.3 27 L13.2 29.5 L10.3 32" fill="none" stroke="#333" stroke-width="1.7"/></svg>
<div class="b" style="left:1100.7px;top:36px;width:2px;height:29px;background:#a6a6a6"></div>
<svg style="left:1116.2px;top:31px" width="39" height="42" viewBox="0 0 39 42"><defs><filter id="blur" x="-50%" y="-200%" width="200%" height="500%"><feGaussianBlur stdDeviation="1.5"/></filter></defs><ellipse cx="19.5" cy="37.8" rx="13" ry="2" fill="#000" opacity="0.13" filter="url(#blur)"/><circle cx="19.5" cy="19" r="18.8" fill="#c6c6c6"/><path d="M10.5 19.5 L17 26 L29 11.5" fill="none" stroke="#ebebeb" stroke-width="4.8" stroke-linejoin="miter"/></svg>
<svg style="left:1177.2px;top:31px" width="39" height="42" viewBox="0 0 39 42"><defs><filter id="blur" x="-50%" y="-200%" width="200%" height="500%"><feGaussianBlur stdDeviation="1.5"/></filter></defs><ellipse cx="19.5" cy="37.8" rx="13" ry="2" fill="#000" opacity="0.13" filter="url(#blur)"/><circle cx="19.5" cy="19" r="18.8" fill="#c6c6c6"/><path d="M12 11.5 L27 26.5 M27 11.5 L12 26.5" fill="none" stroke="#ebebeb" stroke-width="5"/></svg>
<div class="b" style="left:1233.8px;top:26.5px;width:52px;height:49.5px;box-sizing:border-box;border:2.5px solid #1f78cb;background:#eef4fb"></div>
<svg style="left:1238.6px;top:31.4px" width="38" height="38" viewBox="0 0 38 38"><rect x="0.8" y="0.8" width="36.4" height="36" rx="5" fill="#d9d9d9" stroke="#a9a9a9" stroke-width="1.6"/><defs><linearGradient id="bg1" x1="0" y1="0" x2="0" y2="1"><stop offset="0" stop-color="#f7ecc0"/><stop offset=".3" stop-color="#efd768"/><stop offset=".6" stop-color="#e2bf35"/><stop offset="1" stop-color="#c79f28"/></linearGradient></defs><path d="M13.1 5.0 L25.8 5.0 L20.3 11.1 L27.0 11.1 L8.2 28.1 L14.0 17.4 L6.7 16.8 Z" fill="url(#bg1)" stroke="#b4903a" stroke-width="1.6" stroke-linejoin="round"/><circle cx="29.6" cy="7.5" r="2.6" fill="#7fc06a"/><circle cx="23.7" cy="26" r="8.9" fill="#4f8fe2"/><path d="M19 26 L22.6 29.6 L28.6 22.4" fill="none" stroke="#f2f6fd" stroke-width="2.8"/></svg>
<div class="b" style="left:1297px;top:36px;width:2px;height:29px;background:#a6a6a6"></div>
<div class="b" style="left:1308px;top:29px;width:271.5px;height:45px;background:#fff"></div>
<svg style="left:1559.5px;top:46.5px" width="13" height="8" viewBox="0 0 13 8"><path d="M0.2 0.3 H12.6 L6.4 7.4 Z" fill="#111"/></svg>
<div class="b" style="left:1591.6px;top:36px;width:2px;height:29px;background:#a6a6a6"></div>
<svg style="left:1609.4px;top:35.2px" width="40" height="38" viewBox="0 0 40 38"><defs><linearGradient id="sg" x1="0" y1="0" x2="0" y2="1"><stop offset="0" stop-color="#f8d54e"/><stop offset="1" stop-color="#eea416"/></linearGradient><linearGradient id="pg" x1="0" y1="0" x2="0" y2="1"><stop offset="0" stop-color="#b7e884"/><stop offset="1" stop-color="#86cf4e"/></linearGradient></defs><polygon points="17.0,0.8 21.7,11.5 33.4,12.7 24.6,20.5 27.1,31.9 17.0,26.0 6.9,31.9 9.4,20.5 0.6,12.7 12.3,11.5" fill="url(#sg)" stroke="#cc8f1f" stroke-width="1.5" stroke-linejoin="round"/><path d="M26.3 19.3 H32.3 V24.6 H37.6 V30.6 H32.3 V35.9 H26.3 V30.6 H21 V24.6 H26.3 Z" fill="url(#pg)" stroke="#4f9a2a" stroke-width="1.8" stroke-linejoin="round"/></svg>
<div class="b" style="left:1665.7px;top:36px;width:2px;height:29px;background:#a6a6a6"></div>
<svg style="left:1683px;top:34.5px" width="38" height="38" viewBox="0 0 38 38"><defs><filter id="blur" x="-50%" y="-200%" width="200%" height="500%"><feGaussianBlur stdDeviation="1.5"/></filter></defs><ellipse cx="19" cy="33.5" rx="16" ry="1.8" fill="#000" opacity="0.2" filter="url(#blur)"/><path d="M31 3 Q33.5 0.5 35.5 2.5 Q37 4.5 34.5 7 L31 10 L28 6 Z" fill="#a8742b"/><path d="M24.5 5.5 L31.5 12.5 L29 16 L21 8 Z" fill="#b5ab9b"/><path d="M23.5 5.5 L32 13 Q33 16 30.5 18.5 L18.5 30 Q17 30.8 15.8 29.4 L1 13.6 Q0.6 12.2 2.2 12 Q14 11 23.5 5.5 Z" fill="#dbb46d" stroke="#c39a52" stroke-width="1"/><path d="M6 13.5 L21.5 28 M11 12.5 L25.5 25 M16.5 10.5 L29.5 21" stroke="#b98c42" stroke-width="1.4" fill="none"/></svg>
<svg style="left:1743.8px;top:34px" width="36" height="38" viewBox="0 0 36 38"><defs><filter id="blur" x="-50%" y="-200%" width="200%" height="500%"><feGaussianBlur stdDeviation="1.5"/></filter></defs><ellipse cx="17" cy="33.5" rx="12" ry="1.8" fill="#000" opacity="0.16" filter="url(#blur)"/><path d="M22.5 22.5 L32 31.5" stroke="#525a52" stroke-width="4.8" stroke-linecap="round"/><path d="M21.5 21.5 L24.5 24.3" stroke="#c9b36a" stroke-width="4.2"/><circle cx="13.2" cy="13.6" r="11.5" fill="#fbfbfb" stroke="#828282" stroke-width="2.6"/><path d="M8.3 19.5 L13.2 7 L18.1 19.5 M10.2 15.3 H16.2" fill="none" stroke="#b9b9b9" stroke-width="2.2"/></svg>
<svg style="left:1802.8px;top:31px" width="38" height="38" viewBox="0 0 38 38"><defs><linearGradient id="btn" x1="0" y1="0" x2="0" y2="1"><stop offset="0" stop-color="#f6f6f6"/><stop offset="1" stop-color="#dcdcdc"/></linearGradient></defs><rect x="1.2" y="1.2" width="35" height="35" rx="4.5" fill="url(#btn)" stroke="#8c8c8c" stroke-width="2.2"/><path d="M25.5 5 H14.5 Q8.8 5 8.8 11.2 Q8.8 17.5 14.5 17.5 H15.8 V33.5 H18.8 V8 H22 V33.5 H25 V8 H25.5 Z" fill="#555"/></svg>
<svg style="left:1863.4px;top:31px" width="38" height="38" viewBox="0 0 38 38"><defs><linearGradient id="btn" x1="0" y1="0" x2="0" y2="1"><stop offset="0" stop-color="#f6f6f6"/><stop offset="1" stop-color="#dcdcdc"/></linearGradient></defs><rect x="1.2" y="1.2" width="35" height="35" rx="4.5" fill="url(#btn)" stroke="#8c8c8c" stroke-width="2.2"/><rect x="9.5" y="11.5" width="12.6" height="3.4" fill="#555"/><path d="M22 12.6 H29 V23.6 H21" fill="none" stroke="#555" stroke-width="2.2"/><path d="M13.4 23.6 L22 19.2 V28 Z" fill="#555"/></svg>
<div class="b" style="left:713.7px;top:96.2px;width:14.4px;height:14.4px;border-radius:50%;background:#1c8cf0"></div>
<div class="b" style="left:713.7px;top:143.2px;width:14.4px;height:14.4px;border-radius:50%;background:#1c8cf0"></div>
<div class="b" style="left:631px;top:381px;width:2px;height:32px;background:#8f8f8f;"></div>
<div class="b" style="left:786px;top:381px;width:2px;height:32px;background:#8f8f8f;"></div>
<div class="b" style="left:1047px;top:374px;width:225px;height:44px;background:#fff;box-sizing:border-box;border:2px solid #7a7a7a;"></div>
<div class="b" style="left:1281px;top:381px;width:2px;height:32px;background:#8f8f8f;"></div>
<div class="b" style="left:1535px;top:381px;width:2px;height:32px;background:#8f8f8f;"></div>
<div class="b" style="left:1837px;top:381px;width:2px;height:32px;background:#8f8f8f;"></div>
<svg style="left:801.4px;top:381.4px" width="31" height="31" viewBox="0 0 31 31"><rect x="0.8" y="0.8" width="28.6" height="29" fill="#f1f3f5" stroke="#9b9b9b" stroke-width="1.6"/><path d="M0.8 8.1 H29.400000000000002" stroke="#9b9b9b" stroke-width="1.5"/><path d="M0.8 15.3 H29.400000000000002" stroke="#9b9b9b" stroke-width="1.5"/><path d="M0.8 22.6 H29.400000000000002" stroke="#9b9b9b" stroke-width="1.5"/><path d="M10.3 0.8 V29.8" stroke="#9b9b9b" stroke-width="1.5"/><path d="M19.9 0.8 V29.8" stroke="#9b9b9b" stroke-width="1.5"/><rect x="10" y="0.6" width="10.4" height="29.4" fill="#ffe338" stroke="#f1a900" stroke-width="1.8"/></svg>
<svg style="left:864px;top:383.5px" width="37" height="30" viewBox="0 0 37 30"><path d="M2 13 L11 2 L20 13 H15 Q15 21 21 26 Q9 25 7.5 13 Z" fill="#4b9cf2"/><path d="M35 17 L26 28 L17 17 H22 Q22 9 16 4 Q28 5 29.5 17 Z" fill="#3b7ee3"/></svg>
<svg style="left:1355.2px;top:381px" width="40" height="35" viewBox="0 0 40 35"><rect x="1.2" y="13.2" width="37.6" height="19.6" fill="#fff" stroke="#686878" stroke-width="2.2"/><rect x="5" y="16.6" width="30" height="13" fill="#5c90d9"/><path d="M6.5 26.5 L9 20.5 L31 2.5 L35.5 7 L13 25.5 Z" fill="#f1d98e" stroke="#c39b58" stroke-width="1.2" stroke-linejoin="round"/><path d="M29.5 3.7 L31.6 1.9 Q33.6 0.6 35.3 2.4 L36.2 3.4 Q37.4 5.2 35.8 6.8 L33.9 8.4 Z" fill="#d2364a"/><path d="M6.5 26.5 L7.8 23.2 L10 25.6 Z" fill="#2b2b2b"/></svg>
<svg style="left:1415.6px;top:381.4px" width="41" height="31" viewBox="0 0 41 31"><defs><linearGradient id="pg2" x1="0" y1="0" x2="0" y2="1"><stop offset="0" stop-color="#b7e884"/><stop offset="1" stop-color="#86cf4e"/></linearGradient></defs><rect x="0.8" y="0.8" width="28.6" height="29" fill="#f1f3f5" stroke="#9b9b9b" stroke-width="1.6"/><path d="M0.8 8.1 H29.400000000000002" stroke="#9b9b9b" stroke-width="1.5"/><path d="M0.8 15.3 H29.400000000000002" stroke="#9b9b9b" stroke-width="1.5"/><path d="M0.8 22.6 H29.400000000000002" stroke="#9b9b9b" stroke-width="1.5"/><path d="M10.3 0.8 V29.8" stroke="#9b9b9b" stroke-width="1.5"/><path d="M19.9 0.8 V29.8" stroke="#9b9b9b" stroke-width="1.5"/><rect x="0.6" y="7.6" width="29" height="8" fill="#ffe338" stroke="#f1a900" stroke-width="1.8"/><path d="M28 13 H33.5 V18.3 H38.8 V24 H33.5 V29.4 H28 V24 H22.6 V18.3 H28 Z" fill="url(#pg2)" stroke="#4f9a2a" stroke-width="1.8" stroke-linejoin="round"/></svg>
<svg style="left:1476px;top:381.4px" width="42" height="31" viewBox="0 0 42 31"><rect x="0.8" y="0.8" width="28.6" height="29" fill="#f1f3f5" stroke="#9b9b9b" stroke-width="1.6"/><path d="M0.8 8.1 H29.400000000000002" stroke="#9b9b9b" stroke-width="1.5"/><path d="M0.8 15.3 H29.400000000000002" stroke="#9b9b9b" stroke-width="1.5"/><path d="M0.8 22.6 H29.400000000000002" stroke="#9b9b9b" stroke-width="1.5"/><path d="M10.3 0.8 V29.8" stroke="#9b9b9b" stroke-width="1.5"/><path d="M19.9 0.8 V29.8" stroke="#9b9b9b" stroke-width="1.5"/><rect x="0.6" y="7.6" width="29" height="8" fill="#ffe338" stroke="#f1a900" stroke-width="1.8"/><rect x="23.8" y="17.4" width="16.6" height="7.2" fill="#f3a467" stroke="#ad5a14" stroke-width="1.8"/></svg>
<svg style="left:1717px;top:377.3px" width="42" height="39" viewBox="0 0 42 39"><rect x="0.8" y="0.8" width="28.4" height="29" fill="#f1f3f5" stroke="#9b9b9b" stroke-width="1.6"/><path d="M0.8 8.1 H29.2" stroke="#9b9b9b" stroke-width="1.5"/><path d="M0.8 15.3 H29.2" stroke="#9b9b9b" stroke-width="1.5"/><path d="M0.8 22.6 H29.2" stroke="#9b9b9b" stroke-width="1.5"/><path d="M10.3 0.8 V29.8" stroke="#9b9b9b" stroke-width="1.5"/><path d="M19.7 0.8 V29.8" stroke="#9b9b9b" stroke-width="1.5"/><rect x="14.8" y="12" width="25" height="25" rx="1.8" fill="#5183a6" stroke="#3d6d8f" stroke-width="1.8"/><rect x="19.8" y="13" width="15" height="10" fill="#f4f7fa" stroke="#3d6d8f" stroke-width="1.1"/><rect x="21.8" y="28.5" width="11" height="8" fill="#d9dde1" stroke="#3d6d8f" stroke-width="1"/><rect x="28" y="30.3" width="2.6" height="5" fill="#5b6c7a"/></svg>
<svg style="left:1778px;top:377.3px" width="43" height="39" viewBox="0 0 43 39"><defs><linearGradient id="fg2" x1="0" y1="0" x2="0" y2="1"><stop offset="0" stop-color="#b9d6ee"/><stop offset="1" stop-color="#8db8dc"/></linearGradient></defs><rect x="0.8" y="0.8" width="28.4" height="29" fill="#f1f3f5" stroke="#9b9b9b" stroke-width="1.6"/><path d="M0.8 8.1 H29.2" stroke="#9b9b9b" stroke-width="1.5"/><path d="M0.8 15.3 H29.2" stroke="#9b9b9b" stroke-width="1.5"/><path d="M0.8 22.6 H29.2" stroke="#9b9b9b" stroke-width="1.5"/><path d="M10.3 0.8 V29.8" stroke="#9b9b9b" stroke-width="1.5"/><path d="M19.7 0.8 V29.8" stroke="#9b9b9b" stroke-width="1.5"/><path d="M8 36 V13 L10.5 9.8 H21.5 L23.8 14.6 H40 Q41 14.6 41 15.6 V36 Q41 37 40 37 H9 Q8 37 8 36 Z" fill="url(#fg2)" stroke="#6b9bc1" stroke-width="1.6" stroke-linejoin="round"/><path d="M24.8 18.5 L33 26 H28.6 V32 H21 V26 H16.6 Z" fill="none" stroke="#5d8fb8" stroke-width="1.8" stroke-linejoin="round"/></svg>
<svg style="left:2066.7px;top:386.8px" width="25" height="25" viewBox="0 0 25 25"><path d="M0 1.2 H24.6 M0 23.2 H24.6" stroke="#3b4b69" stroke-width="2.2"/><path d="M5.2 4 V20.5" stroke="#3b4b69" stroke-width="2"/><path d="M5.2 2.6 L8.8 8 H1.6 Z M5.2 21.8 L8.8 16.4 H1.6 Z" fill="#3b4b69"/><path d="M13.4 20.5 L18.6 5.5 L23.8 20.5 M15.3 15.5 H21.9" fill="none" stroke="#7d8ca3" stroke-width="1.9"/></svg>
<div class="b" style="left:625px;top:424px;width:1492px;height:274px;background:#fff;"></div>
<div class="b" style="left:625px;top:423px;width:1492px;height:2px;background:#adadad;"></div>
<div class="b" style="left:625px;top:467.5px;width:1492px;height:2px;background:#9a9a9a;"></div>
<div class="b" style="left:624.2px;top:424px;width:2px;height:275px;background:#a0a0a8;"></div>
<div class="b" style="left:680px;top:424px;width:2.2px;height:275px;background:#8c9098;"></div>
<div class="b" style="left:958.5px;top:426px;width:1.5px;height:41px;background:#dcdcdc;"></div>
<div class="b" style="left:1294px;top:426px;width:1.5px;height:41px;background:#dcdcdc;"></div>
<div class="b" style="left:1433.5px;top:426px;width:1.5px;height:41px;background:#dcdcdc;"></div>
<div class="b" style="left:1681px;top:426px;width:1.5px;height:41px;background:#dcdcdc;"></div>
<div class="b" style="left:1951px;top:426px;width:1.5px;height:41px;background:#dcdcdc;"></div>
<div class="b" style="left:2115.5px;top:424px;width:2px;height:44px;background:#d2d2d2;"></div>
<div class="b" style="left:627px;top:506.2px;width:53px;height:1.2px;background:#dcdcdc;"></div>
<div class="b" style="left:683.5px;top:509px;width:274.5px;height:35.5px;background:#e9f0fb;"></div>
<div class="b" style="left:962.0px;top:509px;width:331.5px;height:35.5px;background:#e9f0fb;"></div>
<div class="b" style="left:1297.5px;top:509px;width:135.5px;height:35.5px;background:#e9f0fb;"></div>
<div class="b" style="left:1437.0px;top:509px;width:243.5px;height:35.5px;background:#e9f0fb;"></div>
<div class="b" style="left:1684.5px;top:509px;width:266px;height:35.5px;background:#e9f0fb;"></div>
<div class="b" style="left:1954.5px;top:509px;width:160.5px;height:35.5px;background:#e9f0fb;"></div>
<div class="b" style="left:627px;top:544.7px;width:53px;height:1.2px;background:#dcdcdc;"></div>
<div class="b" style="left:627px;top:583.2px;width:53px;height:1.2px;background:#dcdcdc;"></div>
<div class="b" style="left:683.5px;top:586px;width:274.5px;height:35.5px;background:#e9f0fb;"></div>
<div class="b" style="left:962.0px;top:586px;width:331.5px;height:35.5px;background:#e9f0fb;"></div>
<div class="b" style="left:1297.5px;top:586px;width:135.5px;height:35.5px;background:#e9f0fb;"></div>
<div class="b" style="left:1437.0px;top:586px;width:243.5px;height:35.5px;background:#e9f0fb;"></div>
<div class="b" style="left:1684.5px;top:586px;width:266px;height:35.5px;background:#e9f0fb;"></div>
<div class="b" style="left:1954.5px;top:586px;width:160.5px;height:35.5px;background:#e9f0fb;"></div>
<div class="b" style="left:627px;top:621.7px;width:53px;height:1.2px;background:#dcdcdc;"></div>
<div class="b" style="left:627px;top:660.2px;width:53px;height:1.2px;background:#dcdcdc;"></div>
<div class="b" style="left:683.5px;top:661.3px;width:274.5px;height:35px;background:#e9f0fb;"></div>
<div class="b" style="left:682.6px;top:661.3px;width:49px;height:19.7px;background:#7e838d;"></div>
<div class="b" style="left:962.0px;top:661.3px;width:331.5px;height:35px;background:#e9f0fb;"></div>
<div class="b" style="left:961.1px;top:661.3px;width:49px;height:19.7px;background:#7e838d;"></div>
<div class="b" style="left:1297.5px;top:661.3px;width:135.5px;height:35px;background:#e9f0fb;"></div>
<div class="b" style="left:1296.6px;top:661.3px;width:49px;height:19.7px;background:#7e838d;"></div>
<div class="b" style="left:1437.0px;top:661.3px;width:243.5px;height:35px;background:#e9f0fb;"></div>
<div class="b" style="left:1436.1px;top:661.3px;width:49px;height:19.7px;background:#7e838d;"></div>
<div class="b" style="left:1684.5px;top:661.3px;width:266px;height:35px;background:#e9f0fb;"></div>
<div class="b" style="left:1683.6px;top:661.3px;width:49px;height:19.7px;background:#7e838d;"></div>
<div class="b" style="left:1954.5px;top:661.3px;width:160.5px;height:35px;background:#e9f0fb;"></div>
<div class="b" style="left:1953.6px;top:661.3px;width:49px;height:19.7px;background:#7e838d;"></div>
<div class="b" style="left:627px;top:697.2px;width:53px;height:1.3px;background:#d8d8d8;"></div>
<svg style="left:639px;top:481px" width="14" height="21" viewBox="0 0 14 21"><path d="M0.5 0.5 V20.5 L13.5 10.5 Z" fill="#333"/></svg>
<span class="t" style="left:13.0px;top:-19.0px;font-size:25px;line-height:25px;color:#777;transform:scaleX(1.0467);">Navigator</span>
<span class="t" style="left:12.0px;top:34.0px;font-size:24.5px;line-height:24.5px;color:#111;font-weight:bold;transform:scaleX(0.9631);">SCHEMAS</span>
<span class="t" style="left:51.0px;top:82.0px;font-size:24.5px;line-height:24.5px;color:#80808a;transform:scaleX(1.0044);">Filter objects</span>
<span class="t" style="left:640.0px;top:-19.0px;font-size:24px;line-height:24px;color:#fff;transform:scaleX(0.9686);">SQL File 3*</span>
<span class="t" style="left:87.5px;top:136.0px;font-size:25px;line-height:25px;color:#111;font-weight:bold;transform:scaleX(1.1065);">ijwtb_player_database</span>
<span class="t" style="left:130.2px;top:172.0px;font-size:25px;line-height:25px;color:#1b1b1b;transform:scaleX(1.0586);">Tables</span>
<span class="t" style="left:174.3px;top:208.0px;font-size:25px;line-height:25px;color:#1b1b1b;transform:scaleX(0.9959);">account</span>
<span class="t" style="left:217.2px;top:244.0px;font-size:25px;line-height:25px;color:#1b1b1b;transform:scaleX(0.9792);">Columns</span>
<span class="t" style="left:259.7px;top:280.0px;font-size:25px;line-height:25px;color:#1b1b1b;transform:scaleX(0.9334);">STEAM_ID_NUMBER</span>
<span class="t" style="left:259.7px;top:316.0px;font-size:25px;line-height:25px;color:#1b1b1b;transform:scaleX(0.8997);">CURRENT_SERVER_HOURS</span>
<span class="t" style="left:259.7px;top:352.0px;font-size:25px;line-height:25px;color:#1b1b1b;transform:scaleX(0.9670);">ENUM_ID</span>
<span class="t" style="left:259.7px;top:388.0px;font-size:25px;line-height:25px;color:#1b1b1b;transform:scaleX(0.9247);">EMAIL_ADDRESS</span>
<span class="t" style="left:259.7px;top:424.0px;font-size:25px;line-height:25px;color:#1b1b1b;transform:scaleX(0.9254);">PHONE_NUMBER</span>
<span class="t" style="left:259.7px;top:460.0px;font-size:25px;line-height:25px;color:#1b1b1b;transform:scaleX(0.9390);">DATE_OF_BIRTH</span>
<span class="t" style="left:217.2px;top:497.0px;font-size:25px;line-height:25px;color:#1b1b1b;transform:scaleX(1.0039);">Indexes</span>
<span class="t" style="left:217.2px;top:533.0px;font-size:25px;line-height:25px;color:#1b1b1b;transform:scaleX(0.9946);">Foreign Keys</span>
<span class="t" style="left:217.2px;top:569.0px;font-size:25px;line-height:25px;color:#1b1b1b;transform:scaleX(1.0422);">Triggers</span>
<span class="t" style="left:174.3px;top:605.0px;font-size:25px;line-height:25px;color:#1b1b1b;transform:scaleX(1.0412);">donations</span>
<span class="t" style="left:217.2px;top:641.0px;font-size:25px;line-height:25px;color:#1b1b1b;transform:scaleX(0.9792);">Columns</span>
<span class="t" style="left:259.7px;top:677.0px;font-size:25px;line-height:25px;color:#1b1b1b;transform:scaleX(0.9334);">STEAM_ID_NUMBER</span>
<span class="t" style="left:259.7px;top:713.0px;font-size:25px;line-height:25px;color:#1b1b1b;transform:scaleX(0.8997);">CURRENT_SERVER_HOURS</span>
<span class="t" style="left:259.7px;top:749.0px;font-size:25px;line-height:25px;color:#1b1b1b;transform:scaleX(0.9670);">ENUM_ID</span>
<span class="t" style="left:259.7px;top:785.0px;font-size:25px;line-height:25px;color:#1b1b1b;transform:scaleX(0.9216);">TEAM_NAME</span>
<span class="t" style="left:259.7px;top:821.0px;font-size:25px;line-height:25px;color:#1b1b1b;transform:scaleX(0.9721);">DONATION_AMOUNT</span>
<span class="t" style="left:259.7px;top:857.0px;font-size:25px;line-height:25px;color:#1b1b1b;transform:scaleX(0.9332);">DATE</span>
<span class="t" style="left:217.2px;top:893.0px;font-size:25px;line-height:25px;color:#1b1b1b;transform:scaleX(1.0039);">Indexes</span>
<span class="t" style="left:217.2px;top:929.0px;font-size:25px;line-height:25px;color:#1b1b1b;transform:scaleX(0.9946);">Foreign Keys</span>
<span class="t" style="left:217.2px;top:965.0px;font-size:25px;line-height:25px;color:#1b1b1b;transform:scaleX(1.0422);">Triggers</span>
<span class="t" style="left:1318.0px;top:37.0px;font-size:27.5px;line-height:27.5px;color:#15151f;transform:scaleX(0.8408);">Don&#x27;t Limit</span>
<span class="t" style="left:782.6px;top:94.0px;font-size:26.3px;line-height:26.3px;color:#0d7dc3;font-family:'Liberation Mono',monospace;letter-spacing:-0.02px;-webkit-text-stroke:0.55px currentColor;">select</span>
<span class="t" style="left:877.2px;top:94.0px;font-size:26.3px;line-height:26.3px;color:#3a3a3a;font-family:'Liberation Mono',monospace;letter-spacing:-0.02px;-webkit-text-stroke:0.55px currentColor;"> * </span>
<span class="t" style="left:924.4px;top:94.0px;font-size:26.3px;line-height:26.3px;color:#0d7dc3;font-family:'Liberation Mono',monospace;letter-spacing:-0.02px;-webkit-text-stroke:0.55px currentColor;">from</span>
<span class="t" style="left:987.5px;top:94.0px;font-size:26.3px;line-height:26.3px;color:#000;font-family:'Liberation Mono',monospace;letter-spacing:-0.02px;-webkit-text-stroke:0.55px currentColor;"> </span>
<span class="t" style="left:1003.2px;top:94.0px;font-size:26.3px;line-height:26.3px;color:#0d7dc3;font-family:'Liberation Mono',monospace;letter-spacing:-0.02px;-webkit-text-stroke:0.55px currentColor;">account</span>
<span class="t" style="left:1113.6px;top:94.0px;font-size:26.3px;line-height:26.3px;color:#2a3a4a;font-family:'Liberation Mono',monospace;letter-spacing:-0.02px;-webkit-text-stroke:0.55px currentColor;">;</span>
<span class="t" style="left:782.6px;top:142.0px;font-size:26.3px;line-height:26.3px;color:#0d7dc3;font-family:'Liberation Mono',monospace;letter-spacing:-0.02px;-webkit-text-stroke:0.55px currentColor;">select</span>
<span class="t" style="left:877.2px;top:142.0px;font-size:26.3px;line-height:26.3px;color:#3a3a3a;font-family:'Liberation Mono',monospace;letter-spacing:-0.02px;-webkit-text-stroke:0.55px currentColor;"> * </span>
<span class="t" style="left:924.4px;top:142.0px;font-size:26.3px;line-height:26.3px;color:#0d7dc3;font-family:'Liberation Mono',monospace;letter-spacing:-0.02px;-webkit-text-stroke:0.55px currentColor;">from</span>
<span class="t" style="left:987.5px;top:142.0px;font-size:26.3px;line-height:26.3px;color:#000;font-family:'Liberation Mono',monospace;letter-spacing:-0.02px;-webkit-text-stroke:0.55px currentColor;"> </span>
<span class="t" style="left:1003.2px;top:142.0px;font-size:26.3px;line-height:26.3px;color:#151515;font-family:'Liberation Mono',monospace;letter-spacing:-0.02px;-webkit-text-stroke:0.55px currentColor;">donations</span>
<span class="t" style="left:1145.1px;top:142.0px;font-size:26.3px;line-height:26.3px;color:#2a3a4a;font-family:'Liberation Mono',monospace;letter-spacing:-0.02px;-webkit-text-stroke:0.55px currentColor;">;</span>
<span class="t" style="left:681.0px;top:96.0px;font-size:24.6px;line-height:24.6px;color:#3c7ea8;font-family:'Liberation Mono',monospace;-webkit-text-stroke:0.2px currentColor;">1</span>
<span class="t" style="left:681.0px;top:144.0px;font-size:24.6px;line-height:24.6px;color:#3c7ea8;font-family:'Liberation Mono',monospace;-webkit-text-stroke:0.2px currentColor;">2</span>
<span class="t" style="left:648.8px;top:389.0px;font-size:22px;line-height:22px;color:#2a2a33;font-weight:bold;transform:scaleX(1.0499);">Result Grid</span>
<span class="t" style="left:920.0px;top:389.0px;font-size:22px;line-height:22px;color:#2e2e2e;transform:scaleX(1.0075);">Filter Rows:</span>
<span class="t" style="left:1293.5px;top:389.0px;font-size:22px;line-height:22px;color:#2e2e2e;transform:scaleX(1.0334);">Edit:</span>
<span class="t" style="left:1547.0px;top:389.0px;font-size:22px;line-height:22px;color:#2e2e2e;transform:scaleX(1.1147);">Export/Import:</span>
<span class="t" style="left:1848.0px;top:389.0px;font-size:22px;line-height:22px;color:#2e2e2e;transform:scaleX(1.0461);">Wrap Cell Content:</span>
<span class="t" style="left:696.5px;top:435.0px;font-size:25px;line-height:25px;color:#222;transform:scaleX(0.8796);">STEAM_ID_NUMBER</span>
<span class="t" style="left:976.0px;top:435.0px;font-size:25px;line-height:25px;color:#222;transform:scaleX(0.8653);">CURRENT_SERVER_HOURS</span>
<span class="t" style="left:1311.0px;top:435.0px;font-size:25px;line-height:25px;color:#222;transform:scaleX(0.9021);">ENUM_ID</span>
<span class="t" style="left:1451.0px;top:435.0px;font-size:25px;line-height:25px;color:#222;transform:scaleX(0.8773);">TEAM_NAME</span>
<span class="t" style="left:1697.5px;top:435.0px;font-size:25px;line-height:25px;color:#222;transform:scaleX(0.9175);">DONATION_AMOUNT</span>
<span class="t" style="left:1967.5px;top:435.0px;font-size:25px;line-height:25px;color:#222;transform:scaleX(0.9178);">DATE</span>
<span class="t" style="left:687.8px;top:478.0px;font-size:25px;line-height:25px;color:#1a1a1a;transform:scaleX(0.9555);">STEAM_0:7:12438807</span>
<span class="t" style="left:967.8px;top:478.0px;font-size:25px;line-height:25px;color:#1a1a1a;transform:scaleX(0.9737);">00007</span>
<span class="t" style="left:1302.8px;top:478.0px;font-size:25px;line-height:25px;color:#1a1a1a;transform:scaleX(0.9960);">07</span>
<span class="t" style="left:1441.8px;top:478.0px;font-size:25px;line-height:25px;color:#1a1a1a;transform:scaleX(0.9465);">Diamond Supporter</span>
<span class="t" style="left:1691.8px;top:478.0px;font-size:25px;line-height:25px;color:#1a1a1a;transform:scaleX(0.9638);">100.00</span>
<span class="t" style="left:1962.8px;top:478.0px;font-size:25px;line-height:25px;color:#1a1a1a;transform:scaleX(0.9555);">12-26-2020</span>
<span class="t" style="left:687.8px;top:516.0px;font-size:25px;line-height:25px;color:#1a1a1a;transform:scaleX(0.9555);">STEAM_0:8:12438808</span>
<span class="t" style="left:967.8px;top:516.0px;font-size:25px;line-height:25px;color:#1a1a1a;transform:scaleX(0.9737);">00008</span>
<span class="t" style="left:1302.8px;top:516.0px;font-size:25px;line-height:25px;color:#1a1a1a;transform:scaleX(0.9960);">08</span>
<span class="t" style="left:1441.8px;top:516.0px;font-size:25px;line-height:25px;color:#1a1a1a;transform:scaleX(0.9748);">Ruby Supporter</span>
<span class="t" style="left:1691.8px;top:516.0px;font-size:25px;line-height:25px;color:#1a1a1a;transform:scaleX(0.9638);">100.01</span>
<span class="t" style="left:1962.8px;top:516.0px;font-size:25px;line-height:25px;color:#1a1a1a;transform:scaleX(0.9555);">12-26-2020</span>
<span class="t" style="left:687.8px;top:554.0px;font-size:25px;line-height:25px;color:#1a1a1a;transform:scaleX(0.9555);">STEAM_0:9:12438809</span>
<span class="t" style="left:967.8px;top:554.0px;font-size:25px;line-height:25px;color:#1a1a1a;transform:scaleX(0.9737);">00009</span>
<span class="t" style="left:1302.8px;top:554.0px;font-size:25px;line-height:25px;color:#1a1a1a;transform:scaleX(0.9960);">09</span>
<span class="t" style="left:1441.8px;top:554.0px;font-size:25px;line-height:25px;color:#1a1a1a;transform:scaleX(0.9493);">Emerald Supporter</span>
<span class="t" style="left:1691.8px;top:554.0px;font-size:25px;line-height:25px;color:#1a1a1a;transform:scaleX(0.9638);">100.02</span>
<span class="t" style="left:1962.8px;top:554.0px;font-size:25px;line-height:25px;color:#1a1a1a;transform:scaleX(0.9555);">12-26-2020</span>
<span class="t" style="left:687.8px;top:592.0px;font-size:25px;line-height:25px;color:#1a1a1a;transform:scaleX(0.9555);">STEAM_0:1:12438810</span>
<span class="t" style="left:967.8px;top:592.0px;font-size:25px;line-height:25px;color:#1a1a1a;transform:scaleX(0.9737);">00010</span>
<span class="t" style="left:1302.8px;top:592.0px;font-size:25px;line-height:25px;color:#1a1a1a;transform:scaleX(0.9960);">10</span>
<span class="t" style="left:1441.8px;top:592.0px;font-size:25px;line-height:25px;color:#1a1a1a;transform:scaleX(0.9580);">Sapphire Supporter</span>
<span class="t" style="left:1691.8px;top:592.0px;font-size:25px;line-height:25px;color:#1a1a1a;transform:scaleX(0.9638);">100.03</span>
<span class="t" style="left:1962.8px;top:592.0px;font-size:25px;line-height:25px;color:#1a1a1a;transform:scaleX(0.9555);">12-26-2020</span>
<span class="t" style="left:687.8px;top:631.0px;font-size:25px;line-height:25px;color:#1a1a1a;transform:scaleX(0.9625);">STEAM_0:2:12438811</span>
<span class="t" style="left:967.8px;top:631.0px;font-size:25px;line-height:25px;color:#1a1a1a;">01011</span>
<span class="t" style="left:1302.8px;top:631.0px;font-size:25px;line-height:25px;color:#1a1a1a;transform:scaleX(1.0673);">11</span>
<span class="t" style="left:1441.8px;top:631.0px;font-size:25px;line-height:25px;color:#1a1a1a;transform:scaleX(0.9777);">Crystal Supporter</span>
<span class="t" style="left:1691.8px;top:631.0px;font-size:25px;line-height:25px;color:#1a1a1a;transform:scaleX(0.9638);">100.04</span>
<span class="t" style="left:1962.8px;top:631.0px;font-size:25px;line-height:25px;color:#1a1a1a;transform:scaleX(0.9555);">12-26-2020</span>
<span class="t" style="left:686.2px;top:664.0px;font-size:16px;line-height:16px;color:#fff;font-weight:bold;transform:scaleX(0.9260);-webkit-text-stroke:0;">NULL</span>
<span class="t" style="left:964.7px;top:664.0px;font-size:16px;line-height:16px;color:#fff;font-weight:bold;transform:scaleX(0.9260);-webkit-text-stroke:0;">NULL</span>
<span class="t" style="left:1300.2px;top:664.0px;font-size:16px;line-height:16px;color:#fff;font-weight:bold;transform:scaleX(0.9260);-webkit-text-stroke:0;">NULL</span>
<span class="t" style="left:1439.7px;top:664.0px;font-size:16px;line-height:16px;color:#fff;font-weight:bold;transform:scaleX(0.9260);-webkit-text-stroke:0;">NULL</span>
<span class="t" style="left:1687.2px;top:664.0px;font-size:16px;line-height:16px;color:#fff;font-weight:bold;transform:scaleX(0.9260);-webkit-text-stroke:0;">NULL</span>
<span class="t" style="left:1957.2px;top:664.0px;font-size:16px;line-height:16px;color:#fff;font-weight:bold;transform:scaleX(0.9260);-webkit-text-stroke:0;">NULL</span>
<span class="t" style="left:644.0px;top:672.0px;font-size:32px;line-height:32px;color:#505050;font-weight:bold;transform:scaleX(1.0921);">*</span>
</div></body></html>
